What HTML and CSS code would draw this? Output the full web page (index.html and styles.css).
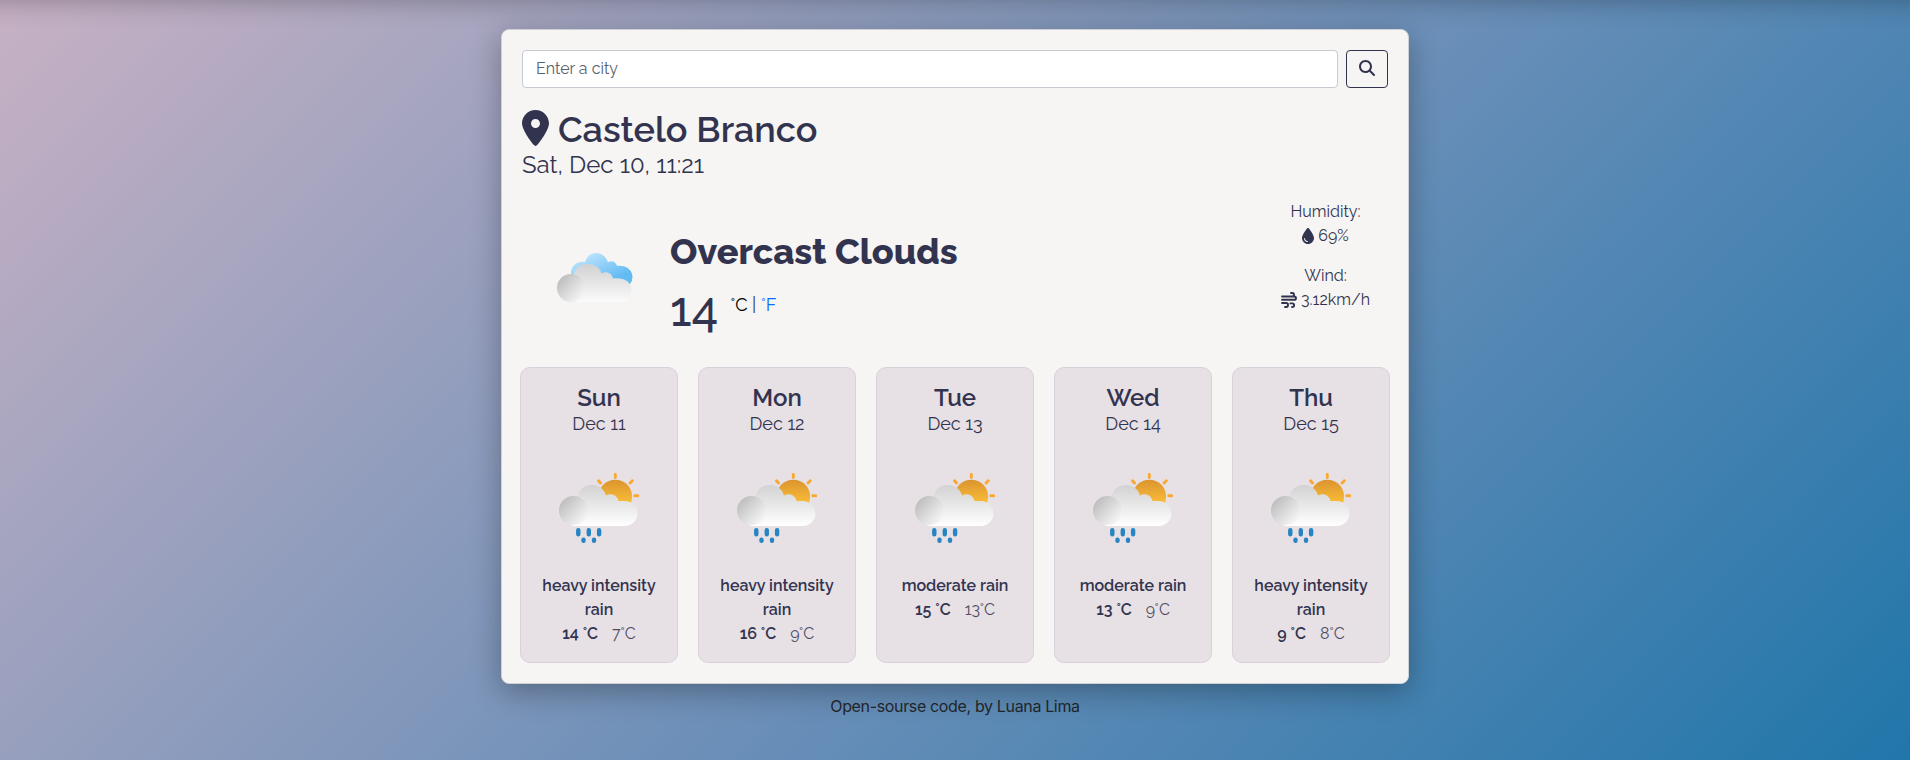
FILE: index.html
```
<!DOCTYPE html>
<html lang="en">
<head>
<meta charset="utf-8">
<title>Weather</title>
<link rel="stylesheet" href="styles.css">
</head>
<body>
<div class="topbar"></div>
<svg class="defs" width="0" height="0" aria-hidden="true">
  <defs>
    <linearGradient id="sun" x1="0" y1="0" x2="0" y2="1"><stop offset="0" stop-color="#db942f"/><stop offset=".7" stop-color="#f9bd38"/></linearGradient>
    <linearGradient id="cloud" gradientUnits="userSpaceOnUse" x1="0" y1="12" x2="0" y2="53"><stop offset="0" stop-color="#d2d2d3"/><stop offset="1" stop-color="#ffffff"/></linearGradient>
    <linearGradient id="puff" x1=".15" y1=".15" x2=".85" y2=".8"><stop offset="0" stop-color="#bfbfbf"/><stop offset="1" stop-color="#f2f2f2"/></linearGradient>
    <linearGradient id="sky" gradientUnits="userSpaceOnUse" x1="30" y1="0" x2="45" y2="32"><stop offset="0" stop-color="#bfe5fc"/><stop offset="1" stop-color="#62bbf2"/></linearGradient>
    <symbol id="rain" viewBox="0 0 80 71">
      <circle cx="56.300" cy="23.500" r="16.800" fill="url(#sun)"/>
      <path d="M56.300 1.500v3M39.500 7.800l2 2.200M73.300 7.800l-2.200 2.200M75.800 22.700h3" stroke="#faa82f" stroke-width="2.900" stroke-linecap="round" fill="none"/>
      <path d="M14.500 53A14 15 0 0 1 18.500 23.500C20 16 26 12 33 12C40 12 45.500 16.500 47 22.500C52 19.500 58.500 22.500 59.500 28H66A12.500 12.500 0 0 1 66 53Z" fill="url(#cloud)"/>
      <circle cx="14.500" cy="37.500" r="14.500" fill="url(#puff)"/>
      <path d="M19.300 57.300v4M29.800 57.300v4M40.100 57.300v4M24.500 66.800v1M35 66.800v1" stroke="#2685c2" stroke-width="4.400" stroke-linecap="round" fill="none"/>
    </symbol>
    <symbol id="clouds" viewBox="0 0 76 50">
      <path d="M14 20C14 13 20 8 28 9C30 3 34 0 39 0C45 0 49 4 51 9C55 7 59 9 60 13C69 12 75.500 17 75.500 24Q75.500 28 73 31L60 34H20Z" fill="url(#sky)"/>
      <path d="M14 49A14 14 0 0 1 17 21C19 14 24 11 31 11C38 11 43 15 44.500 20.500C49 17.500 55 20 56 25.500C66 24 74.500 28 74.500 37.500C74.500 45 69 49 63 49Z" fill="url(#cloud)"/>
      <circle cx="14" cy="35" r="14" fill="url(#puff)"/>
    </symbol>
  </defs>
</svg>
<main class="card">
  <form class="search">
    <input class="search-input" type="text" placeholder="Enter a city">
    <button class="search-button" type="button" aria-label="Search">
      <svg width="16" height="16" viewBox="0 0 512 512"><path fill="currentColor" d="M416 208c0 45.900-14.900 88.300-40 122.700L502.600 457.400c12.500 12.500 12.500 32.800 0 45.300s-32.800 12.500-45.300 0L330.700 376c-34.400 25.200-76.800 40-122.700 40C93.100 416 0 322.900 0 208S93.100 0 208 0S416 93.100 416 208zM208 352c79.500 0 144-64.500 144-144s-64.500-144-144-144S64 128.500 64 208s64.500 144 144 144z"/></svg>
    </button>
  </form>
  <header class="place">
    <h1 class="city"><svg class="pin" width="27" height="36" viewBox="0 0 384 512"><path fill="currentColor" d="M215.700 499.200C267 435 384 279.400 384 192C384 86 298 0 192 0S0 86 0 192c0 87.400 117 243 168.300 307.200c12.300 15.300 35.100 15.300 47.400 0zM192 256c-35.300 0-64-28.700-64-64s28.700-64 64-64s64 28.700 64 64s-28.700 64-64 64z"/></svg><span class="city-name">Castelo Branco</span></h1>
    <div class="date">Sat, Dec 10, 11:21</div>
  </header>
  <section class="current">
    <svg class="current-icon" width="76" height="50"><use href="#clouds"/></svg>
    <div class="summary">
      <h2 class="condition">Overcast Clouds</h2>
      <div class="reading"><span class="degrees">14</span><span class="units"><span class="unit-c">°C</span> | <span class="unit-f">°F</span></span></div>
    </div>
    <div class="details">
      <div class="label-humidity">Humidity:</div>
      <div class="detail"><svg width="12" height="16" viewBox="0 0 384 512"><path fill="currentColor" d="M192 512C86 512 0 426 0 320C0 228.800 130.200 57.700 166.600 11.700C172.600 4.200 181.500 0 191.100 0h1.800c9.600 0 18.500 4.200 24.500 11.700C253.800 57.700 384 228.800 384 320c0 106-86 192-192 192zM96 336c0-8.800-7.200-16-16-16s-16 7.200-16 16c0 61.900 50.100 112 112 112c8.800 0 16-7.200 16-16s-7.200-16-16-16c-44.200 0-80-35.800-80-80z"/></svg><span class="humidity">69%</span></div>
      <div class="label-wind">Wind:</div>
      <div class="detail"><svg width="16" height="16" viewBox="0 0 512 512"><path d="M320 32h40c32 0 56 24 56 56s-24 56-56 56H32M384 144h38c32 0 58 24 58 52s-26 52-58 52H32M32 352h136c32 0 56 28 56 64s-24 64-56 64h-40M352 480h8c36 0 60-26 60-58s-24-58-60-58h-60" fill="none" stroke="currentColor" stroke-width="60" stroke-linecap="round"/></svg><span class="wind">3.12km/h</span></div>
    </div>
  </section>
  <section class="forecast">
    <article class="day"><h3 class="name">Sun</h3><div class="day-date">Dec 11</div><svg class="day-icon" width="80" height="71"><use href="#rain"/></svg><div class="desc">heavy intensity rain</div><div class="temps"><b class="max">14 °C</b><span class="min">7°C</span></div></article>
    <article class="day"><h3 class="name">Mon</h3><div class="day-date">Dec 12</div><svg class="day-icon" width="80" height="71"><use href="#rain"/></svg><div class="desc">heavy intensity rain</div><div class="temps"><b class="max">16 °C</b><span class="min">9°C</span></div></article>
    <article class="day"><h3 class="name">Tue</h3><div class="day-date">Dec 13</div><svg class="day-icon" width="80" height="71"><use href="#rain"/></svg><div class="desc">moderate rain</div><div class="temps"><b class="max">15 °C</b><span class="min">13°C</span></div></article>
    <article class="day"><h3 class="name">Wed</h3><div class="day-date">Dec 14</div><svg class="day-icon" width="80" height="71"><use href="#rain"/></svg><div class="desc">moderate rain</div><div class="temps"><b class="max">13 °C</b><span class="min">9°C</span></div></article>
    <article class="day"><h3 class="name">Thu</h3><div class="day-date">Dec 15</div><svg class="day-icon" width="80" height="71"><use href="#rain"/></svg><div class="desc">heavy intensity rain</div><div class="temps"><b class="max">9 °C</b><span class="min">8°C</span></div></article>
  </section>
</main>
<footer class="credit">Open-sourse code, by Luana Lima</footer>
</body>
</html>
```
FILE: styles.css
```
* { box-sizing: border-box; }
body {
  display: flow-root;
  margin: 0;
  height: 760px;
  overflow: hidden;
  background: linear-gradient(135deg, #c7b1c4 0%, #6b8fb8 55%, #2176aa 100%);
  font-family: Raleway, Lato, sans-serif;
  font-size: 16px;
  line-height: 24px;
  color: #32344f;
}
h1, h2, h3 { margin: 0; }
.defs { display: block; }
svg { flex: none; }
.topbar { height: 40px; margin: -40px -40px 0; box-shadow: 0 0 28px rgba(0, 0, 0, .3); }
.card {
  width: 908px;
  height: 655px;
  margin: 29px auto 0;
  padding: 20px 18px;
  background: #f6f5f3;
  border: 1px solid #cfd0d6;
  border-radius: 8px;
  box-shadow: 0 8px 30px rgba(0, 0, 0, .3);
}
.search { display: flex; gap: 8px; padding: 0 2px; }
.search-input {
  flex: 1;
  height: 38px;
  padding: 5px 13px 7px;
  border: 1px solid #c6cad0;
  border-radius: 4px;
  background: #fff;
  font: 16px Raleway, Lato, sans-serif;
}
.search-input::placeholder { color: #59626a; }
.search-button {
  width: 42px;
  height: 38px;
  padding: 0 1px 2px 0;
  display: flex;
  align-items: center;
  justify-content: center;
  border: 1px solid #32344f;
  border-radius: 4px;
  background: none;
  color: #32344f;
}
.place { padding: 20px 2px 0; }
.city { display: flex; gap: 9px; height: 43px; align-items: center; font-size: 36px; font-weight: 600; line-height: 43px; }
.pin { margin-bottom: 3px; }
.date { font-size: 24px; line-height: 28px; }
.current { display: flex; height: 188px; }
.current-icon { margin: 74px 37px 0 37px; }
.summary { flex: 1; padding-top: 51px; }
.condition { font-size: 36px; font-weight: 800; line-height: 43px; }
.reading { display: flex; gap: 12px; padding-top: 12px; }
.degrees { font-size: 48px; font-weight: 500; line-height: 48px; }
.units { padding-top: 8px; font-size: 18px; }
.unit-c { color: #000; }
.unit-f { color: #0d6efd; }
.details { width: 129px; padding-top: 21px; text-align: center; }
.label-wind { padding-top: 16px; }
.detail { display: flex; justify-content: center; align-items: center; gap: 4px; }
.forecast { display: grid; grid-template-columns: repeat(5, 158px); justify-content: space-between; }
.day {
  height: 296px;
  padding: 16px 15px;
  display: flex;
  flex-direction: column;
  align-items: center;
  text-align: center;
  background: #e7e0e5;
  border: 1px solid #d9d0d9;
  border-radius: 10px;
}
.name { font-size: 24px; font-weight: 600; line-height: 28px; }
.day-date { font-size: 18px; line-height: 24px; }
.day-icon { margin: 37px 0 30px; }
.desc { font-weight: 600; }
.temps { display: flex; gap: 14px; }
.max { font-weight: 600; }
.min { opacity: .85; }
.credit { padding-top: 10px; text-align: center; font-family: Inter, sans-serif; font-size: 16px; letter-spacing: -.35px; color: #212529; }
```
